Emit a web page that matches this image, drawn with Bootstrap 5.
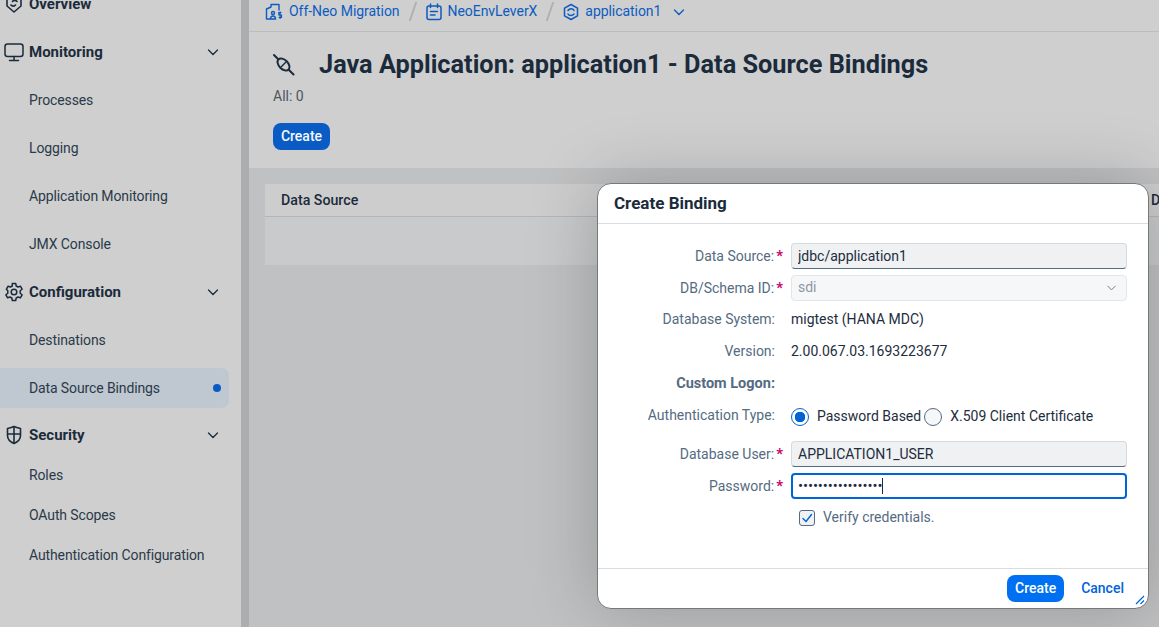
<!DOCTYPE html>
<html lang="en">
<head>
<meta charset="utf-8">
<title>Data Source Bindings</title>
<link href="https://cdn.jsdelivr.net/npm/bootstrap@5.3.0/dist/css/bootstrap.min.css" rel="stylesheet">
<style>
html,body{height:100%;overflow:hidden}
body{font-family:Roboto,"Noto Sans",sans-serif;font-size:14px;color:#1c2a38;background:#c0c1c2}
.shell{height:627px}
.side{width:249px;flex:none;background:#cfcfcf;border-right:8px solid #abadaf;overflow:hidden}
.side-list{margin-top:-20px}
.nav-row{height:48px;padding-left:29px;color:#2a3a4a;letter-spacing:-.12px}
.nav-row.tight{height:40px}
.nav-head{font-weight:700;font-size:15px;color:#1b2b3b;padding-left:4px;letter-spacing:0}
.nav-head.sec-head{height:40px;margin-top:7px}
.nav-head svg.ic{width:20px;height:20px;margin-right:5px;flex:none}
.nav-head .chev{margin-left:auto;margin-right:22px}
.chev{width:12px;height:12px;flex:none}
.nav-active{background:#bfc7d0;height:40px;margin:4px 12px 4px 0;border-radius:0 8px 8px 0}
.dot{width:8px;height:8px;border-radius:50%;background:#0a5cc4;margin-left:auto;margin-right:8px}
.main-col{min-width:0;overflow:hidden}
.crumbs{height:32px;background:#cfcfcf;border-bottom:1px solid #bcbdbe;padding:0 0 8px 16px;color:#0c5cc0;letter-spacing:-.05px}
.crumbs svg.cic{width:16px;height:18px;flex:none;margin-right:6px}
.crumbs svg.cic.wide{width:18px}
.sep{width:2px;height:19px;background:#aeb0b2;transform:skewX(-19deg);margin:0 12px;flex:none}
.crumbs .chev{margin-left:12px}
.pagehead{height:136px;background:#cfcfcf;padding:18px 24px 0}
.title-ic{width:24px;height:24px;margin-right:22px;flex:none}
.pagetitle{font-size:25.300px;font-weight:700;margin:0;color:#1b2b3b;white-space:nowrap;line-height:30px}
.allcount{color:#4a5561;margin-top:6px;line-height:20px}
.btn-sap{background:#0a5cc4;color:#f5f8fc;font-weight:500;font-size:14px;border:0;border-radius:8px;width:57px;height:27px;padding:0;line-height:27px}
.pagehead .btn-sap{margin-top:17px}
.tablewrap{padding:16px 16px 0;width:1200px}
.thead-row{height:33px;background:#cdcdce;border-bottom:1px solid #b4b6b8;font-weight:500;padding:1px 0 0 16px;color:#1b2b3b;font-size:14.200px}
.thead-row .farcol{position:absolute;left:886px}
.empty-row{height:48px;background:#c9cacb}
.dlg{position:absolute;left:597px;top:183px;width:552px;height:426px;background:#fff;border:1px solid #76797c;border-radius:14px;box-shadow:0 0 70px rgba(0,0,0,.22);overflow:hidden}
.dlg-head{height:40px;border-bottom:1px solid #d9dde1;padding:1px 0 0 16px;font-size:17px;font-weight:700;color:#1b2b3b}
.dlg-body{padding:16px 0 0;height:345px}
.frow{height:32px}
.frow.gapped{margin-bottom:6px}
.flabel{width:185px;text-align:right;padding-right:8px;color:#556b82;flex:none;white-space:nowrap}
.flabel.req{padding-right:0}
.flabel.strong{font-weight:700;font-size:14.500px}
.req i{color:#c4066d;font-style:normal;font-weight:700;margin-left:2px;font-size:15px}
.fval{margin-left:8px;color:#1d2d3e}
.fbox{width:336px;height:26px;margin-left:8px;font-size:14px;padding:0 6px;border-radius:4px;color:#1d2d3e;font-family:inherit;box-shadow:none!important}
.fbox.form-control{background:#eff1f2;border:1px solid #d5dadd;border-bottom-color:#556b82}
.fbox.form-select{background-color:#f6f7f8;border:1px solid #e3e6e8;color:#8d98a3;opacity:1;background-size:13px 10px;background-position:right 8px center;background-image:url("data:image/svg+xml,%3csvg xmlns='http://www.w3.org/2000/svg' viewBox='0 0 16 16'%3e%3cpath fill='none' stroke='%236a7887' stroke-linecap='round' stroke-linejoin='round' stroke-width='1.500' d='m2 5 6 6 6-6'/%3e%3c/svg%3e")}
.fbox.focus.form-control{background:#fff;border:2px solid #0064d9;padding:0 5px;font-size:15px;letter-spacing:-.1px}
.pwwrap{position:relative}
.caretbar{position:absolute;left:99px;top:5px;width:1px;height:16px;background:#1d2d3e}
.authset{margin-top:2px}
.rad{width:18px;height:18px;margin:0 8px 0 0;flex:none;background:#f6f7f8;border:1px solid #556b82;box-shadow:none!important}
.rad:checked{background-color:#fff;border-color:#0064d9;background-image:radial-gradient(circle,#0064d9 0 5px,transparent 5.500px)}
.radlabel{color:#1d2d3e;white-space:nowrap;margin-right:3px}
.chk{width:16px;height:16px;margin:0 8px 0 0;border:1px solid #556b82;border-radius:3px;background:#eff1f2;flex:none}
.chk svg{width:12px;height:12px}
.chklabel{color:#556b82}
.dlg-foot{height:40px;border-top:1px solid #d9dde1;padding-right:24px}
.dlg-foot .btn-sap{background:#0070f2;color:#fff}
.cancel{color:#0064d9;font-weight:500;margin-left:17px}
.grip{position:absolute;right:3px;bottom:3px;width:10px;height:10px}
</style>
</head>
<body>
<div class="d-flex shell">
  <nav class="side">
    <div class="side-list">
      <div class="nav-row nav-head d-flex align-items-center"><svg class="ic" viewBox="0 0 20 20" fill="none" stroke="#1b2b3b" stroke-width="1.600"><path d="M10 2l7 2.500v7.500l-7 6-7-6V4.500z" stroke-linejoin="round"/><path d="M13 7.500c-1-1.500-3.500-1.500-4.500 0M7 11c1 1.500 3.500 1.500 4.500 0" stroke-linecap="round"/></svg>Overview</div>
      <div class="nav-row nav-head d-flex align-items-center"><svg class="ic" viewBox="0 0 20 20" fill="none" stroke="#1b2b3b" stroke-width="1.500"><rect x="1" y="2" width="18" height="12.500" rx="2.500"/><path d="M10 14.500v4M5.500 18.500h9" stroke-linecap="round"/></svg>Monitoring<svg class="chev" viewBox="0 0 12 12" fill="none" stroke="#1b2b3b" stroke-width="1.300"><path d="M1.500 4L6 8.500 10.500 4" stroke-linecap="round"/></svg></div>
      <div class="nav-row d-flex align-items-center">Processes</div>
      <div class="nav-row d-flex align-items-center">Logging</div>
      <div class="nav-row d-flex align-items-center">Application Monitoring</div>
      <div class="nav-row d-flex align-items-center">JMX Console</div>
      <div class="nav-row nav-head d-flex align-items-center"><svg class="ic" viewBox="0 0 20 20" fill="none" stroke="#1b2b3b" stroke-width="1.500"><circle cx="10" cy="10" r="2.800"/><path d="M8.300 1.500h3.400l.5 2.500 1.800 1 2.400-.8 1.700 3-1.900 1.600v2.400l1.900 1.600-1.700 3-2.400-.8-1.800 1-.5 2.500H8.300l-.5-2.500-1.800-1-2.400.8-1.700-3 1.900-1.600V8.800L2.400 7.200l1.700-3 2.400.8 1.800-1z" stroke-linejoin="round"/></svg>Configuration<svg class="chev" viewBox="0 0 12 12" fill="none" stroke="#1b2b3b" stroke-width="1.300"><path d="M1.500 4L6 8.500 10.500 4" stroke-linecap="round"/></svg></div>
      <div class="nav-row d-flex align-items-center">Destinations</div>
      <div class="nav-row nav-active d-flex align-items-center">Data Source Bindings<span class="dot"></span></div>
      <div class="nav-row nav-head sec-head d-flex align-items-center"><svg class="ic" viewBox="0 0 20 20" fill="none" stroke="#1b2b3b" stroke-width="1.600"><path d="M3.500 3.500C6 3 8 2.500 10 1.500c2 1 4 1.500 6.500 2v7c0 3.500-3 6.500-6.500 8-3.500-1.500-6.500-4.500-6.500-8z" stroke-linejoin="round"/><path d="M10 2v16M3.500 9h13"/></svg>Security<svg class="chev" viewBox="0 0 12 12" fill="none" stroke="#1b2b3b" stroke-width="1.300"><path d="M1.500 4L6 8.500 10.500 4" stroke-linecap="round"/></svg></div>
      <div class="nav-row tight d-flex align-items-center">Roles</div>
      <div class="nav-row tight d-flex align-items-center">OAuth Scopes</div>
      <div class="nav-row tight d-flex align-items-center">Authentication Configuration</div>
    </div>
  </nav>
  <main class="main-col flex-grow-1">
    <div class="crumbs d-flex align-items-center">
      <svg class="cic wide" viewBox="0 0 18 18" fill="none" stroke="#0c5cc0" stroke-width="1.400"><path d="M1.500 16V6l4.500-2V1.500h8V7M1.500 16h3" stroke-linejoin="round" stroke-linecap="round"/><circle cx="8" cy="10" r="1.500"/><path d="M5.500 16c0-2 1-3 2.500-3s2.500 1 2.500 3z"/><path d="M16.500 9.500h-2.700v2.500h2.700v2.500h-2.900M15.100 8.500v7.500" stroke-width="1.200"/></svg>
      <span>Off-Neo Migration</span><span class="sep"></span>
      <svg class="cic" viewBox="0 0 16 18" fill="none" stroke="#0c5cc0" stroke-width="1.500"><rect x="1" y="3" width="14" height="13.500" rx="2"/><path d="M4.500 1v3.500M11.500 1v3.500M4.500 8.500h7M4.500 12h4.500" stroke-linecap="round"/></svg>
      <span>NeoEnvLeverX</span><span class="sep"></span>
      <svg class="cic" viewBox="0 0 16 18" fill="none" stroke="#0c5cc0" stroke-width="1.500"><path d="M8 1.500l6.500 3.700v7.600L8 16.500l-6.500-3.700V5.200z" stroke-linejoin="round"/><path d="M11 7.500C10 5 6.500 5 5 7.500M5 11c1 2 4.500 2 6 0" stroke-linecap="round"/></svg>
      <span>application1</span>
      <svg class="chev" viewBox="0 0 12 12" fill="none" stroke="#0c5cc0" stroke-width="1.300"><path d="M1.500 4L6 8.500 10.500 4" stroke-linecap="round"/></svg>
    </div>
    <header class="pagehead">
      <div class="d-flex align-items-center">
        <svg class="title-ic" viewBox="0 0 24 24" fill="none" stroke="#1b2b3b" stroke-width="2"><path d="M1 2l4.500 4.500M15.500 16.500L20.500 21.500" stroke-linecap="round"/><ellipse cx="10.500" cy="11.500" rx="7.200" ry="4.500" transform="rotate(45 10.500 11.500)"/><path d="M8 14l5-5" stroke-width="1.500"/></svg>
        <h1 class="pagetitle">Java Application: application1 - Data Source Bindings</h1>
      </div>
      <div class="allcount">All: 0</div>
      <button class="btn btn-sap" type="button">Create</button>
    </header>
    <section class="tablewrap">
      <div class="thead-row d-flex align-items-center position-relative">Data Source<span class="farcol">D</span></div>
      <div class="empty-row"></div>
    </section>
  </main>
</div>

<div class="dlg d-flex flex-column" role="dialog">
  <div class="dlg-head d-flex align-items-center">Create Binding</div>
  <form class="dlg-body">
    <div class="frow d-flex align-items-center"><label class="flabel req">Data Source:<i>*</i></label><input class="form-control fbox" value="jdbc/application1"></div>
    <div class="frow d-flex align-items-center"><label class="flabel req">DB/Schema ID:<i>*</i></label><select class="form-select fbox" disabled><option>sdi</option></select></div>
    <div class="frow d-flex align-items-center"><span class="flabel">Database System:</span><span class="fval">migtest (HANA MDC)</span></div>
    <div class="frow d-flex align-items-center"><span class="flabel">Version:</span><span class="fval">2.00.067.03.1693223677</span></div>
    <div class="frow d-flex align-items-center"><span class="flabel strong">Custom Logon:</span></div>
    <div class="frow gapped d-flex align-items-center"><span class="flabel">Authentication Type:</span>
      <div class="fval authset d-flex align-items-center">
        <input class="form-check-input rad" type="radio" name="auth" checked><span class="radlabel">Password Based</span>
        <input class="form-check-input rad" type="radio" name="auth"><span class="radlabel">X.509 Client Certificate</span>
      </div>
    </div>
    <div class="frow d-flex align-items-center"><label class="flabel req">Database User:<i>*</i></label><input class="form-control fbox" value="APPLICATION1_USER"></div>
    <div class="frow d-flex align-items-center"><label class="flabel req">Password:<i>*</i></label><div class="pwwrap"><input class="form-control fbox focus" type="password" value="aaaaaaaaaaaaaaaaa"><span class="caretbar"></span></div></div>
    <div class="frow d-flex align-items-center"><span class="flabel"></span><span class="fval d-flex align-items-center ps-2"><span class="chk d-flex align-items-center justify-content-center"><svg viewBox="0 0 12 12" fill="none" stroke="#0064d9" stroke-width="1.400"><path d="M2 6.500l3 3L10.500 2.500" stroke-linecap="round" stroke-linejoin="round"/></svg></span><span class="chklabel">Verify credentials.</span></span></div>
  </form>
  <div class="dlg-foot d-flex align-items-center justify-content-end">
    <button class="btn btn-sap" type="button">Create</button>
    <span class="cancel">Cancel</span>
  </div>
  <svg class="grip" viewBox="0 0 10 10" fill="none" stroke="#0064d9" stroke-width="1.200"><path d="M1 9L9 1M5.500 9L9 5.500"/></svg>
</div>
<script src="https://cdn.jsdelivr.net/npm/bootstrap@5.3.0/dist/js/bootstrap.bundle.min.js"></script>
</body>
</html>
